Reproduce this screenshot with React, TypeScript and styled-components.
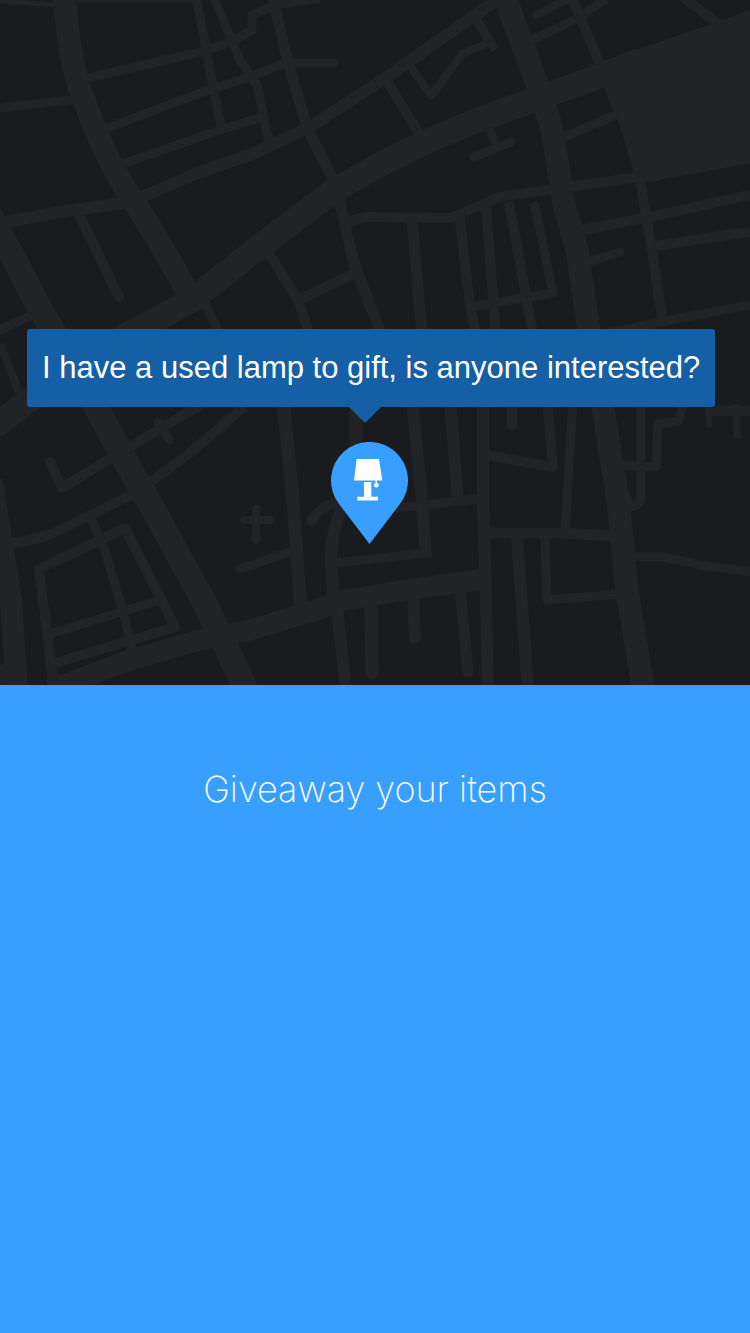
import React from "react";
import styled, { createGlobalStyle } from "styled-components";

const GlobalStyle = createGlobalStyle`
  *, *::before, *::after { box-sizing: border-box; }
  html, body { margin: 0; padding: 0; background: #389fff; }
`;

const Page = styled.main`
  min-height: 100vh;
  display: flex;
  flex-direction: column;
  background: #389fff;
  color: #ffffff;
  font-family: "Liberation Sans", Arial, sans-serif;
`;

const MapPanel = styled.section`
  position: relative;
  overflow: hidden;
  display: flex;
  flex-direction: column;
  align-items: center;
  gap: 35px;
  padding: 329px 35px 141px 27px;
  background: #1a1b1f;
`;

const MapArt = styled.svg`
  position: absolute;
  inset: 0;
  width: 100%;
  height: 100%;
  fill: none;
  stroke: #222327;
  stroke-linejoin: round;
`;

const Bubble = styled.p`
  position: relative;
  width: 100%;
  margin: 0;
  padding: 19px 8px 19px 15px;
  border-radius: 3px;
  background: #145fa6;
  font-size: 31px;
  line-height: 40px;

  &::after {
    content: "";
    position: absolute;
    top: 100%;
    left: calc(50% - 22px);
    border: 16px solid transparent;
    border-top-color: #145fa6;
    border-bottom-width: 0;
  }
`;

const Pin = styled.svg`
  position: relative;
  display: block;
  width: 80px;
  height: 102px;
`;

const Intro = styled.section`
  flex: 1;
  padding: 80px 24px;
  text-align: center;
`;

const Title = styled.h1`
  margin: 0;
  font-family: Inter, "Liberation Sans", sans-serif;
  font-size: 36px;
  line-height: 48px;
  font-weight: 200;
`;

type Road = { width: number; d: string; round?: boolean };

const roads: Road[] = [
  // main avenues
  { width: 23, d: "M64 -5C68 40 72 68 82 95C98 138 112 170 134 202C158 238 168 258 192 300" },
  { width: 25, d: "M-10 430L27 402L60 380L125 336L192 300L250 254L335 190Q420 140 500 112L600 76L640 60" },
  { width: 25, d: "M-10 215L12 255L38 305L60 343L95 405L125 460L148 500L203 600L248 693" },
  { width: 23, d: "M503 -8L535 78Q552 120 557 160L564 205L577 250L588 325L603 408L618 500L627 590L644 693" },
  { width: 21, d: "M50 690L130 660L200 640L250 630L310 612L345 600L420 588L485 579" },
  { width: 22, d: "M-8 480L1 540L11 600L17 693" },
  { width: 9, d: "M0 665L8 693" },
  // north-west blocks
  { width: 5, d: "M0 1L55 5" },
  { width: 4, d: "M77 0H195" },
  { width: 9, d: "M0 108L85 98" },
  { width: 9, d: "M88 78L205 51L235 40L252 30V15L275 5L320 -2" },
  { width: 9, d: "M110 127L200 93L250 77L285 63H334", round: true },
  { width: 9, d: "M122 164L220 130L262 117" },
  { width: 9, d: "M196 -5L208 60L222 132" },
  { width: 9, d: "M213 -5L240 60L257 85L269 142" },
  { width: 11, d: "M272 -5L290 70L308 130L336 185L345 225L354 263L366 295L382 335" },
  { width: 12, d: "M0 223L60 212L130 202L200 172L250 155L310 127L390 75L465 22L500 -2" },
  { width: 10, d: "M78 213L119 297", round: true },
  { width: 9, d: "M-2 331L32 315" },
  { width: 8, d: "M0 344L19 392" },
  { width: 9, d: "M203 298L220 335" },
  { width: 10, d: "M268 252L298 300L310 335" },
  { width: 10, d: "M298 300L354 274" },
  // north blocks
  { width: 10, d: "M385 78L420 135" },
  { width: 8, d: "M406 60L431 96L462 54L490 42" },
  { width: 9, d: "M472 12L495 50" },
  { width: 8, d: "M489 128L497 148" },
  { width: 9, d: "M474 157L511 142", round: true },
  { width: 8, d: "M536 15L566 0", round: true },
  { width: 9, d: "M530 41L580 17L606 -2" },
  { width: 10, d: "M571 -4L602 68" },
  { width: 10, d: "M683 -3L720 25" },
  { width: 9, d: "M562 138L618 114" },
  // north-east blocks
  { width: 10, d: "M348 223Q360 216 375 217L450 218L500 197L560 188L640 177L660 176" },
  { width: 10, d: "M639 175L652 250L663 326" },
  { width: 10, d: "M577 231L650 217L750 195" },
  { width: 10, d: "M655 246L700 239L750 232" },
  { width: 9, d: "M588 262L620 252", round: true },
  { width: 9, d: "M600 335L660 322L750 305" },
  { width: 11, d: "M412 220L422 335" },
  { width: 10, d: "M459 213L470 305L476 335" },
  { width: 9, d: "M470 307L553 293L535 206", round: true },
  { width: 10, d: "M486 207L496 335" },
  { width: 10, d: "M509 202L533 335" },
  // south-west blocks
  { width: 10, d: "M50 462L62 488L108 460L150 435L200 405", round: true },
  { width: 9, d: "M158 422L169 440", round: true },
  { width: 10, d: "M148 484L190 453L245 406" },
  { width: 10, d: "M10 543Q42 540 62 529L135 493" },
  { width: 10, d: "M54 690L48 640L39 569L75 552L125 528L175 627L55 663" },
  { width: 9, d: "M88 512L104 548L125 618L135 665" },
  { width: 9, d: "M50 634L160 600" },
  { width: 8, d: "M256 509V540M244 520H270", round: true },
  { width: 9, d: "M240 569L292 551", round: true },
  // south blocks
  { width: 13, d: "M283 400L293 500L301 612" },
  { width: 13, d: "M356 400V450" },
  { width: 10, d: "M311 521Q322 504 342 501", round: true },
  { width: 12, d: "M334 606L331 560Q332 520 348 500" },
  { width: 9, d: "M396 508L486 498" },
  { width: 9, d: "M334 563L427 553" },
  { width: 12, d: "M412 400L421 490L426 557" },
  { width: 12, d: "M450 400L458 502" },
  { width: 12, d: "M483 400V500L486 600L488 690" },
  { width: 12, d: "M337 608L346 690" },
  { width: 13, d: "M371 606L372 673", round: true },
  { width: 12, d: "M413 596L415 638", round: true },
  { width: 11, d: "M460 590L468 672", round: true },
  // south-east blocks
  { width: 10, d: "M487 455L553 467L547 400" },
  { width: 10, d: "M512 400V425", round: true },
  { width: 9, d: "M573 400L565 530" },
  { width: 11, d: "M489 533H560L612 536" },
  { width: 12, d: "M517 536L528 690" },
  { width: 9, d: "M545 536L547 600L622 594" },
  { width: 9, d: "M632 557H662Q680 560 700 565L752 572" },
  { width: 9, d: "M641 400V496Q641 506 631 507L619 480", round: true },
  { width: 9, d: "M618 465L656 467L658 424L679 421L684 400", round: true },
  { width: 6, d: "M709 404V425", round: true },
  { width: 7, d: "M737 404V438" },
  { width: 10, d: "M705 411H752" },
];

function StreetMap() {
  return (
    <MapArt viewBox="0 0 750 685" preserveAspectRatio="xMidYMid slice" aria-hidden="true">
      <path
        d="M600 62L665 40L712 24L752 9V163L648 182H636L630 160L618 120L604 88Z"
        fill="#222327"
        stroke="none"
      />
      {roads.map((road) => (
        <path
          key={road.d}
          d={road.d}
          strokeWidth={road.width}
          strokeLinecap={road.round ? "round" : "butt"}
        />
      ))}
    </MapArt>
  );
}

function LampPin() {
  return (
    <Pin viewBox="0 0 80 102" role="img" aria-label="Lamp">
      <path d="M38.5 102L7.9 61.8A38.5 38.5 0 1 1 69.1 61.8Z" fill="#389fff" />
      <g fill="#ffffff">
        <path d="M25.7 17H48L51.3 38.6H23Z" />
        <path d="M33 40H40.3V54.7H47V58.6H26.3V54.7H33Z" />
        <path d="M44.5 38H45.9V42H44.5Z" />
        <circle cx="45.3" cy="43.2" r="2.4" />
      </g>
    </Pin>
  );
}

export default function App() {
  return (
    <>
      <GlobalStyle />
      <Page>
        <MapPanel>
          <StreetMap />
          <Bubble>I have a used lamp to gift, is anyone interested?</Bubble>
          <LampPin />
        </MapPanel>
        <Intro>
          <Title>Giveaway your items</Title>
        </Intro>
      </Page>
    </>
  );
}
